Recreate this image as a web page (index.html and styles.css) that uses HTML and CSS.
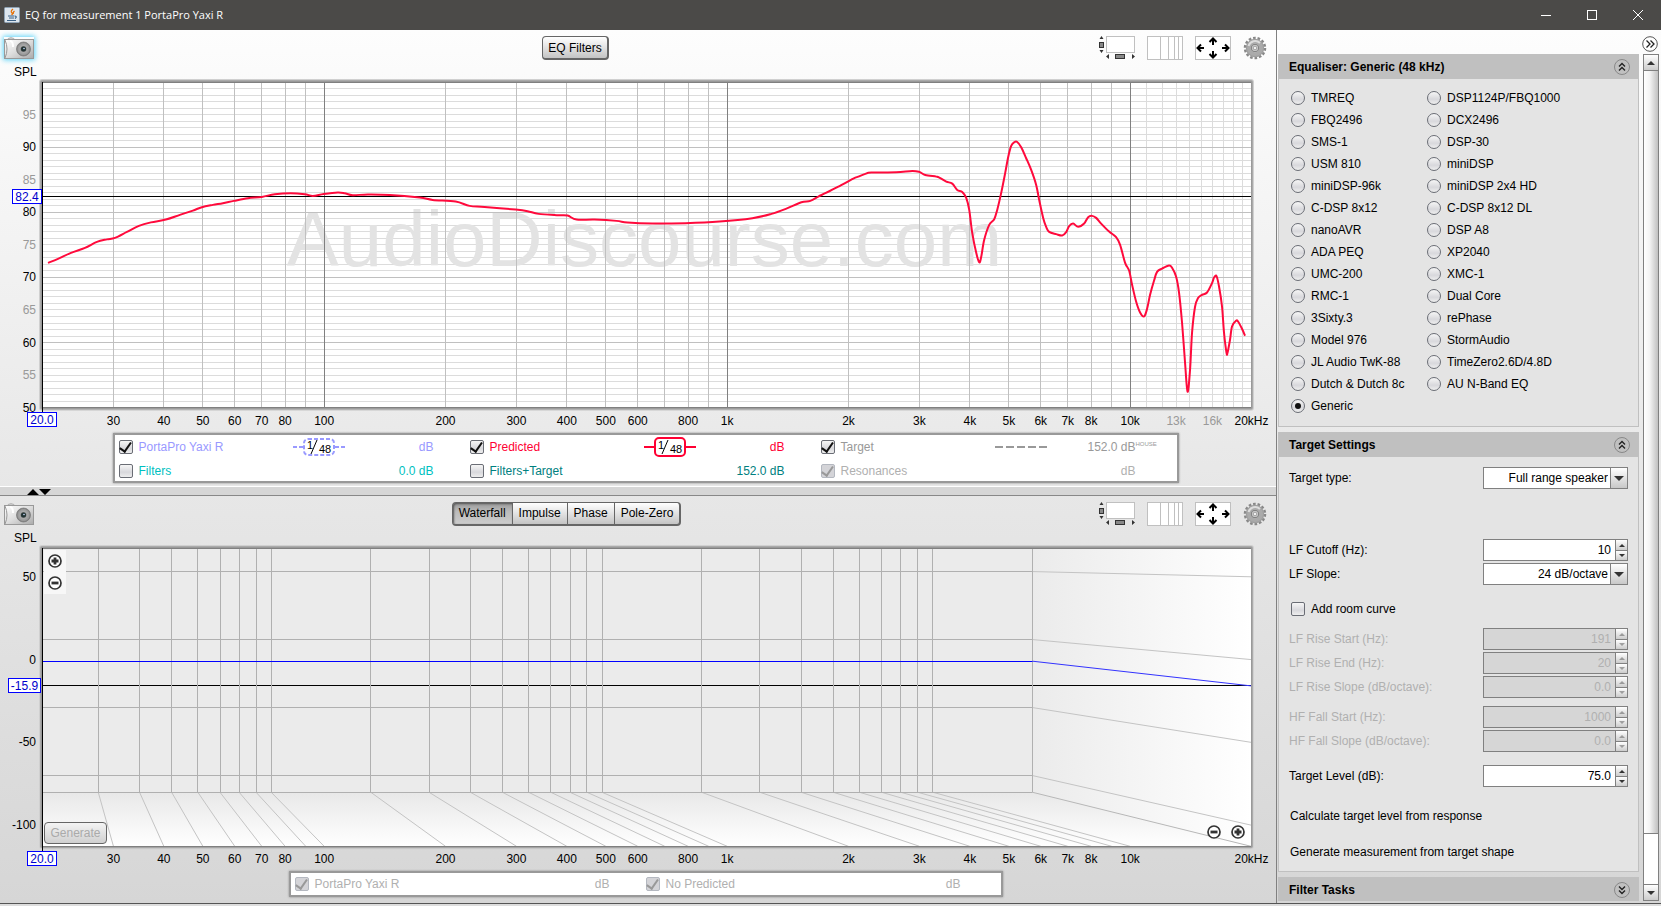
FILE: index.html
```
<!DOCTYPE html>
<html lang="en">
	<head>
		<meta charset="UTF-8">
		<title>EQ for measurement 1 PortaPro Yaxi R</title>
		<link rel="stylesheet" href="styles.css">
	</head>
	<body>
		<svg class="defs" width="0" height="0" aria-hidden="true">
			<defs>
				<linearGradient id="metal" x1="0" y1="0" x2="1" y2="1">
					<stop offset="0" stop-color="#fff"/>
					<stop offset=".5" stop-color="#ddd"/>
					<stop offset="1" stop-color="#aaa"/>
				</linearGradient>
				<radialGradient id="lens">
					<stop offset="0" stop-color="#333"/>
					<stop offset=".3" stop-color="#666"/>
					<stop offset=".5" stop-color="#aaa"/>
					<stop offset=".8" stop-color="#999"/>
					<stop offset="1" stop-color="#777"/>
				</radialGradient>
				<linearGradient id="wall">
					<stop offset="0" stop-color="#ebebeb"/>
					<stop offset="1" stop-color="#fff"/>
				</linearGradient>
				<linearGradient id="floor" x2="0" y2="1">
					<stop offset="0" stop-color="#e8e8e8"/>
					<stop offset="1" stop-color="#fff"/>
				</linearGradient>
			</defs>
			<symbol id="i-camera" viewBox="0 0 30 22">
				<path d="M4 1.500 Q7 -.5 10 1.500 V3 H4z" fill="#ccc" stroke="#999" stroke-width=".5"/>
				<rect x=".5" y="2.500" width="29" height="19" fill="url(#metal)" stroke="#999"/>
				<path d="M1 3 Q5 12 1 21" fill="none" stroke="#999"/>
				<path d="M6 4 Q9 4 9 10" fill="none" stroke="#fff" stroke-width="2"/>
				<circle cx="19.500" cy="12" r="7" fill="url(#lens)" stroke="#777" stroke-width=".7"/>
				<circle cx="19.500" cy="12" r="2.500" fill="#233"/>
				<circle cx="20" cy="11.500" r=".8" fill="#cdf"/>
			</symbol>
			<symbol id="i-scroll" viewBox="0 0 36 24">
				<rect x="7.500" y=".5" width="28" height="16" fill="#fff" stroke="#c0c0c0"/>
				<path d="M.5 3 L2.500 0 4.500 3z M.5 14 L2.500 17 4.500 14z M10 18 V23 L7 20.500z M33 18 V23 L36 20.500z" fill="#333"/>
				<rect x=".5" y="6.500" width="4" height="5" fill="#888" stroke="#333"/>
				<rect x="16.500" y="18.500" width="9" height="4" fill="#888" stroke="#333"/>
			</symbol>
			<symbol id="i-grid" viewBox="0 0 36 24">
				<rect x=".5" y=".5" width="35" height="23" fill="#fff" stroke="#c0c0c0"/>
				<path d="M13.500 1V23 M21.500 1V23 M27.500 1V23 M31.500 1V23" stroke="#c0c0c0"/>
			</symbol>
			<symbol id="i-fit" viewBox="0 0 36 24">
				<rect x=".5" y=".5" width="35" height="23" fill="#fff" stroke="#c0c0c0"/>
				<path d="M18 9V3 M14.500 6 L18 2.500 21.500 6 M18 15V21 M14.500 18 L18 21.500 21.500 18 M9 12H3 M6 8.500 L2.500 12 6 15.500 M27 12H33 M30 8.500 L33.500 12 30 15.500" fill="none" stroke="#000" stroke-width="2"/>
			</symbol>
			<symbol id="i-gear" viewBox="0 0 24 24">
				<circle cx="12" cy="12" r="9.500" fill="none" stroke="#888" stroke-width="3.500" stroke-dasharray="2.500 1.764"/>
				<circle cx="12" cy="12" r="6.700" fill="none" stroke="#aaa" stroke-width="5"/>
				<circle cx="12" cy="12" r="8.500" fill="none" stroke="#999" stroke-width=".8"/>
				<path d="M5.500 10 A7 7 0 0 1 17 7" fill="none" stroke="#ddd" stroke-width="2"/>
				<circle cx="12" cy="12" r="3.800" fill="#ccc" stroke="#777"/>
				<circle cx="12" cy="12" r="1.800" fill="#f0f0f0" stroke="#888" stroke-width=".7"/>
			</symbol>
			<symbol id="i-plus" viewBox="0 0 14 14">
				<circle cx="7" cy="7" r="6" fill="#fff" stroke="#333" stroke-width="1.700"/>
				<path d="M3.500 7H10.500 M7 3.500V10.500" stroke="#333" stroke-width="2.800"/>
			</symbol>
			<symbol id="i-minus" viewBox="0 0 14 14">
				<circle cx="7" cy="7" r="6" fill="#fff" stroke="#333" stroke-width="1.700"/>
				<path d="M3.500 7H10.500" stroke="#333" stroke-width="2.800"/>
			</symbol>
			<symbol id="i-up" viewBox="0 0 16 16">
				<circle cx="8" cy="8" r="7.500" fill="none" stroke="#888"/>
				<path d="M5 7.500 L8 4.500 11 7.500 M5 11.500 L8 8.500 11 11.500" fill="none" stroke="#222" stroke-width="1.400"/>
			</symbol>
			<symbol id="i-down" viewBox="0 0 16 16">
				<circle cx="8" cy="8" r="7.500" fill="none" stroke="#888"/>
				<path d="M5 4.500 L8 7.500 11 4.500 M5 8.500 L8 11.500 11 8.500" fill="none" stroke="#222" stroke-width="1.400"/>
			</symbol>
			<symbol id="i-more" viewBox="0 0 16 16">
				<circle cx="8" cy="8" r="7.300" fill="#fff" stroke="#555"/>
				<path d="M4.500 4.500 L8 8 4.500 11.500 M8.500 4.500 L12 8 8.500 11.500" fill="none" stroke="#222" stroke-width="1.300"/>
			</symbol>
		</svg>

		<header class="titlebar">
			<svg class="app-icon" width="16" height="16" viewBox="0 0 16 16">
				<rect x=".5" y=".5" width="15" height="15" rx="1" fill="#dde6ee" stroke="#8fa3b5"/>
				<path d="M9 2 Q6 4.500 8 6 Q9 7 7.500 8 M10.500 4 Q8.500 5.500 9.500 7" fill="none" stroke="#e76f00" stroke-width="1.200"/>
				<path d="M4 9H10.500 M5 11H10 M3 13.500H12 M11 9 Q13.500 9.500 11 11.500" fill="none" stroke="#3a6186" stroke-width="1.200"/>
			</svg>
			<span class="title">EQ for measurement 1 PortaPro Yaxi R</span>
			<button class="win" aria-label="Minimize"><svg width="10" height="10"><path d="M0 5.500H10" stroke="#fff"/></svg></button>
			<button class="win" aria-label="Maximize"><svg width="10" height="10"><rect x=".5" y=".5" width="9" height="9" fill="none" stroke="#fff"/></svg></button>
			<button class="win" aria-label="Close"><svg width="10" height="10"><path d="M0 0L10 10M10 0L0 10" stroke="#fff"/></svg></button>
		</header>

		<main>
			<div class="plots">
				<section class="panel panel-top">
					<div class="toolbar">
						<button class="icon camera active" aria-label="Capture graph"><svg width="30" height="22"><use href="#i-camera"/></svg></button>
						<div class="tabs"><button class="single">EQ Filters</button></div>
						<div class="tools">
							<button class="icon" aria-label="Scrollbars"><svg width="36" height="24"><use href="#i-scroll"/></svg></button>
							<button class="icon" aria-label="Frequency axis"><svg width="36" height="24"><use href="#i-grid"/></svg></button>
							<button class="icon" aria-label="Graph limits"><svg width="36" height="24"><use href="#i-fit"/></svg></button>
							<button class="icon" aria-label="Graph controls"><svg width="24" height="24"><use href="#i-gear"/></svg></button>
						</div>
					</div>
					<div class="chart"><svg id="spl"></svg></div>
					<div class="legend">
						<div class="trace measured">
							<label><input type="checkbox" checked>PortaPro Yaxi R</label>
							<svg width="52" height="20">
								<path d="M0 10H10 M42 10H52" stroke="#99f" stroke-width="2" stroke-dasharray="4 2"/>
								<rect x="11" y="2" width="30" height="16" rx="4" fill="#fff" stroke="#99f" stroke-width="2" stroke-dasharray="4 2"/>
								<path d="M18 17L24 3" stroke="#000"/>
								<text x="14" y="12">1</text><text x="26" y="16">48</text>
							</svg>
							<span class="value">dB</span>
						</div>
						<div class="trace predicted">
							<label><input type="checkbox" checked>Predicted</label>
							<svg width="52" height="20">
								<path d="M0 10H11 M41 10H52" stroke="#f03" stroke-width="2"/>
								<rect x="11" y="1" width="30" height="18" rx="4" fill="#fff" stroke="#f03" stroke-width="2"/>
								<path d="M18 17L24 3" stroke="#000"/>
								<text x="14" y="12">1</text><text x="26" y="16">48</text>
							</svg>
							<span class="value">dB</span>
						</div>
						<div class="trace target">
							<label><input type="checkbox" checked>Target</label>
							<svg width="52" height="20"><path d="M0 10H52" stroke="#999" stroke-width="2" stroke-dasharray="8 3"/></svg>
							<span class="value">152.0 dB</span><sup>HOUSE</sup>
						</div>
						<div class="trace filters">
							<label><input type="checkbox">Filters</label>
							<span class="value">0.0 dB</span>
						</div>
						<div class="trace combined">
							<label><input type="checkbox">Filters+Target</label>
							<span class="value">152.0 dB</span>
						</div>
						<div class="trace off">
							<label><input type="checkbox" checked disabled>Resonances</label>
							<span class="value">dB</span>
						</div>
					</div>
				</section>

				<div class="splitter"><svg width="24" height="6"><path d="M0 6L6 0 12 6z M12 0H24L18 6z"/></svg></div>

				<section class="panel panel-bottom">
					<div class="toolbar">
						<button class="icon camera" aria-label="Capture graph"><svg width="30" height="22"><use href="#i-camera"/></svg></button>
						<div class="tabs">
							<button class="selected">Waterfall</button>
							<button>Impulse</button>
							<button>Phase</button>
							<button>Pole-Zero</button>
						</div>
						<div class="tools">
							<button class="icon" aria-label="Scrollbars"><svg width="36" height="24"><use href="#i-scroll"/></svg></button>
							<button class="icon" aria-label="Frequency axis"><svg width="36" height="24"><use href="#i-grid"/></svg></button>
							<button class="icon" aria-label="Graph limits"><svg width="36" height="24"><use href="#i-fit"/></svg></button>
							<button class="icon" aria-label="Graph controls"><svg width="24" height="24"><use href="#i-gear"/></svg></button>
						</div>
					</div>
					<div class="chart">
						<svg id="waterfall"></svg>
						<div class="zoom zoom-y">
							<button class="icon" aria-label="Zoom in"><svg width="14" height="14"><use href="#i-plus"/></svg></button>
							<button class="icon" aria-label="Zoom out"><svg width="14" height="14"><use href="#i-minus"/></svg></button>
						</div>
						<div class="zoom zoom-x">
							<button class="icon" aria-label="Zoom out"><svg width="14" height="14"><use href="#i-minus"/></svg></button>
							<button class="icon" aria-label="Zoom in"><svg width="14" height="14"><use href="#i-plus"/></svg></button>
						</div>
						<button class="generate" disabled>Generate</button>
					</div>
					<div class="legend">
						<div class="trace off">
							<label><input type="checkbox" checked disabled>PortaPro Yaxi R</label>
							<span class="value">dB</span>
						</div>
						<div class="trace off">
							<label><input type="checkbox" checked disabled>No Predicted</label>
							<span class="value">dB</span>
						</div>
					</div>
				</section>
			</div>

			<aside>
				<div class="side-top">
					<button class="icon" aria-label="Hide panel"><svg width="16" height="16"><use href="#i-more"/></svg></button>
				</div>
				<div class="side-body">
					<div class="sections">
						<section class="group">
							<h2>Equaliser: Generic (48 kHz)<button class="icon" aria-label="Collapse"><svg width="16" height="16"><use href="#i-up"/></svg></button></h2>
							<div class="group-body equalisers">
								<label><input type="radio" name="eq">TMREQ</label>
								<label><input type="radio" name="eq">DSP1124P/FBQ1000</label>
								<label><input type="radio" name="eq">FBQ2496</label>
								<label><input type="radio" name="eq">DCX2496</label>
								<label><input type="radio" name="eq">SMS-1</label>
								<label><input type="radio" name="eq">DSP-30</label>
								<label><input type="radio" name="eq">USM 810</label>
								<label><input type="radio" name="eq">miniDSP</label>
								<label><input type="radio" name="eq">miniDSP-96k</label>
								<label><input type="radio" name="eq">miniDSP 2x4 HD</label>
								<label><input type="radio" name="eq">C-DSP 8x12</label>
								<label><input type="radio" name="eq">C-DSP 8x12 DL</label>
								<label><input type="radio" name="eq">nanoAVR</label>
								<label><input type="radio" name="eq">DSP A8</label>
								<label><input type="radio" name="eq">ADA PEQ</label>
								<label><input type="radio" name="eq">XP2040</label>
								<label><input type="radio" name="eq">UMC-200</label>
								<label><input type="radio" name="eq">XMC-1</label>
								<label><input type="radio" name="eq">RMC-1</label>
								<label><input type="radio" name="eq">Dual Core</label>
								<label><input type="radio" name="eq">3Sixty.3</label>
								<label><input type="radio" name="eq">rePhase</label>
								<label><input type="radio" name="eq">Model 976</label>
								<label><input type="radio" name="eq">StormAudio</label>
								<label><input type="radio" name="eq">JL Audio TwK-88</label>
								<label><input type="radio" name="eq">TimeZero2.6D/4.8D</label>
								<label><input type="radio" name="eq">Dutch &amp; Dutch 8c</label>
								<label><input type="radio" name="eq">AU N-Band EQ</label>
								<label><input type="radio" name="eq" checked>Generic</label>
							</div>
						</section>

						<section class="group">
							<h2>Target Settings<button class="icon" aria-label="Collapse"><svg width="16" height="16"><use href="#i-up"/></svg></button></h2>
							<div class="group-body settings">
								<div class="row">
									<label for="type">Target type:</label>
									<div class="combo"><select id="type"><option>Full range speaker</option></select></div>
								</div>
								<div class="row gap-large">
									<label for="cutoff">LF Cutoff (Hz):</label>
									<div class="spinner"><input id="cutoff" type="text" value="10"><button aria-label="Up"></button><button aria-label="Down"></button></div>
								</div>
								<div class="row">
									<label for="slope">LF Slope:</label>
									<div class="combo"><select id="slope"><option>24 dB/octave</option></select></div>
								</div>
								<div class="row gap-medium">
									<label class="check"><input type="checkbox">Add room curve</label>
								</div>
								<div class="row gap-small disabled">
									<label for="rise-start">LF Rise Start (Hz):</label>
									<div class="spinner"><input id="rise-start" type="text" value="191" disabled><button aria-label="Up" disabled></button><button aria-label="Down" disabled></button></div>
								</div>
								<div class="row disabled">
									<label for="rise-end">LF Rise End (Hz):</label>
									<div class="spinner"><input id="rise-end" type="text" value="20" disabled><button aria-label="Up" disabled></button><button aria-label="Down" disabled></button></div>
								</div>
								<div class="row disabled">
									<label for="rise-slope">LF Rise Slope (dB/octave):</label>
									<div class="spinner"><input id="rise-slope" type="text" value="0.0" disabled><button aria-label="Up" disabled></button><button aria-label="Down" disabled></button></div>
								</div>
								<div class="row gap-small disabled">
									<label for="fall-start">HF Fall Start (Hz):</label>
									<div class="spinner"><input id="fall-start" type="text" value="1000" disabled><button aria-label="Up" disabled></button><button aria-label="Down" disabled></button></div>
								</div>
								<div class="row disabled">
									<label for="fall-slope">HF Fall Slope (dB/octave):</label>
									<div class="spinner"><input id="fall-slope" type="text" value="0.0" disabled><button aria-label="Up" disabled></button><button aria-label="Down" disabled></button></div>
								</div>
								<div class="row gap-medium">
									<label for="level">Target Level (dB):</label>
									<div class="spinner"><input id="level" type="text" value="75.0"><button aria-label="Up"></button><button aria-label="Down"></button></div>
								</div>
								<button class="action">Calculate target level from response</button>
								<button class="action">Generate measurement from target shape</button>
							</div>
						</section>

						<section class="group closed">
							<h2>Filter Tasks<button class="icon" aria-label="Expand"><svg width="16" height="16"><use href="#i-down"/></svg></button></h2>
						</section>
					</div>
					<div class="scrollbar">
						<button aria-label="Scroll up"></button>
						<div class="thumb"></div>
						<div class="track"></div>
						<button aria-label="Scroll down"></button>
					</div>
				</div>
			</aside>
		</main>
		<footer></footer>
		<script src="script.js"></script>
	</body>
</html>
```

FILE: styles.css
```
* {
	box-sizing: border-box;
}
html, body {
	margin: 0;
	height: 100%;
}
body {
	display: grid;
	grid-template-rows: 30px minmax(0, 1fr) 3px;
	font-family: "Liberation Sans", Arial, sans-serif;
	font-size: 12px;
	line-height: 16px;
	color: #000;
	overflow: hidden;
}
button, input, select {
	font: inherit;
	color: inherit;
	margin: 0;
	padding: 0;
}
svg {
	display: block;
}
.defs {
	position: absolute;
}
.icon {
	display: block;
	border: none;
	background: none;
}

.titlebar {
	display: flex;
	align-items: center;
	padding-left: 4px;
	background: #4b4a48;
	color: #fff;
	font-family: "Open Sans", "Noto Sans", sans-serif;
	font-size: 11px;
}
.titlebar .title {
	flex: 1;
	padding-left: 5px;
}
.win {
	display: flex;
	align-items: center;
	justify-content: center;
	width: 46px;
	height: 30px;
	border: none;
	background: none;
}

main {
	display: flex;
	min-height: 0;
	background: linear-gradient(#fdfdfd, #e8e8e8 50%, #d6d6d6);
}
.plots {
	flex: 1;
	min-width: 0;
	display: flex;
	flex-direction: column;
}
.panel {
	display: flex;
	flex-direction: column;
	min-height: 0;
}
.panel-top {
	flex: 458 0 0;
	padding-bottom: 3px;
}
.panel-bottom {
	flex: 406 0 0;
	padding-bottom: 6px;
}

.toolbar {
	display: flex;
	align-items: center;
	justify-content: space-between;
	height: 36px;
	padding: 0 9px 0 4px;
}
.camera.active {
	box-shadow: 0 0 5px 1px #5cd3f7;
}
.panel-top .tabs {
	padding-left: 18px;
}
.tabs {
	display: flex;
}
.tabs button {
	height: 24px;
	padding: 0 6px;
	border: 1px solid #666;
	border-bottom-width: 2px;
	border-left-width: 0;
	background: linear-gradient(#fff, #e8e8e8 40%, #c4c4c4);
}
.tabs button:first-child {
	border-left-width: 1px;
	border-radius: 4px 0 0 4px;
}
.tabs button:last-child {
	border-right-width: 2px;
	border-radius: 0 4px 4px 0;
}
.tabs .single:first-child {
	padding: 0 5px;
	border-radius: 4px;
}
.tabs .selected {
	background: linear-gradient(#999, #bbb 40%, #ccc);
	box-shadow: inset 1px 1px 2px #555;
}
.tools {
	display: flex;
	gap: 12px;
}

.chart {
	position: relative;
	flex: 1;
	min-height: 0;
}
.chart > svg {
	position: absolute;
	width: 100%;
	height: 100%;
}
.watermark {
	font-size: 78px;
	fill: #e3e3e3;
}
.minor {
	fill: #999;
}
.cursor {
	fill: #00c;
}
.zoom {
	position: absolute;
	display: flex;
	gap: 8px;
	padding: 4px;
	background: #f7f7f7;
}
.zoom-y {
	flex-direction: column;
	top: 18px;
	left: 44px;
}
.zoom-x {
	right: 26px;
	bottom: 27px;
	gap: 10px;
	padding: 5px;
	background: none;
}
.generate {
	position: absolute;
	left: 44px;
	bottom: 27px;
	width: 63px;
	height: 22px;
	border: 1px solid #666;
	border-radius: 4px;
	background: linear-gradient(#f4f4f4, #d0d0d0);
	color: #aaa;
}

/* trace table under each graph */
.legend {
	display: grid;
	grid-template-columns: repeat(3, 351px);
	align-self: center;
	width: 1066px;
	height: 50px;
	margin-left: 15px;
	padding: 0 4px;
	border: 2px solid #999;
	background: #fff;
	box-shadow: 0 0 2px #888;
}
.panel-bottom .legend {
	grid-template-columns: repeat(2, 351px);
	width: 714px;
	height: 26px;
}
.trace {
	display: flex;
	align-items: center;
	height: 24px;
}
.panel-bottom .trace {
	height: 22px;
}
.trace label {
	display: flex;
	align-items: center;
	gap: 6px;
	flex: 0 0 174px;
}
.trace label + .value {
	flex: 0 0 141px;
	text-align: right;
}
.trace svg + .value {
	flex: 0 0 89px;
	text-align: right;
}
.trace sup {
	font-size: 6px;
	line-height: 8px;
	align-self: flex-start;
	padding-top: 5px;
}
.trace svg text {
	font-size: 11px;
	fill: #000;
}
.measured {
	color: #99f;
}
.predicted {
	color: #f03;
}
.target {
	color: #999;
}
.filters {
	color: #00bfbf;
}
.combined {
	color: #008080;
}
.off {
	color: #b0b0b0;
}

.splitter {
	height: 10px;
	padding: 2px 0 0 27px;
	border-top: 1px solid #fff;
	border-bottom: 1px solid #888;
	background: #d6d6d6;
}

aside {
	width: 385px;
	display: flex;
	flex-direction: column;
	border-left: 1px solid #808080;
}
.side-top {
	display: flex;
	justify-content: flex-end;
	height: 24px;
	padding: 4px 3px 0 0;
}
.side-body {
	display: flex;
	flex: 1;
	min-height: 0;
	gap: 4px;
	padding: 0 2px 2px 1px;
}
.sections {
	flex: 1;
	display: flex;
	flex-direction: column;
	gap: 5px;
	overflow: hidden;
}
.group h2 {
	display: flex;
	align-items: center;
	justify-content: space-between;
	height: 25px;
	margin: 0;
	padding: 0 9px 0 11px;
	background: #c0c0c0;
	font-size: 12px;
}
.group-body {
	border: 1px solid #c0c0c0;
	border-top: none;
	background: #e4e4e4;
}
.equalisers {
	display: grid;
	grid-template-columns: 136px auto;
	grid-auto-rows: 22px;
	padding: 8px 12px 9px;
}
.equalisers label, .check {
	display: flex;
	align-items: center;
	gap: 6px;
}

input[type="checkbox"], input[type="radio"] {
	appearance: none;
	display: grid;
	place-items: center;
	width: 14px;
	height: 14px;
	border: 1px solid #6a6d75;
	border-radius: 2px;
	background: linear-gradient(#f6f6f6, #d8d8dc 60%, #eee);
}
input[type="radio"] {
	border-radius: 50%;
}
input[type="radio"]:checked::after {
	content: "";
	width: 6px;
	height: 6px;
	border-radius: 50%;
	background: #111;
}
input[type="checkbox"]:checked::after {
	content: "";
	width: 5px;
	height: 10px;
	border: solid #111;
	border-width: 0 2px 2px 0;
	transform: translateY(-1px) rotate(35deg);
}
input[type="checkbox"]:disabled {
	border-color: #b4b8c0;
	background: #d4d4d8;
}
input[type="checkbox"]:disabled::after {
	border-color: #999;
}

.settings {
	display: flex;
	flex-direction: column;
	gap: 2px;
	padding: 10px 10px 8px;
}
.row {
	display: flex;
	align-items: center;
	justify-content: space-between;
	height: 22px;
}
.check {
	padding-left: 2px;
}
.gap-small {
	margin-top: 6px;
}
.gap-medium {
	margin-top: 11px;
}
.gap-large {
	margin-top: 48px;
}
.combo, .spinner {
	position: relative;
	width: 145px;
	height: 22px;
	border: 1px solid #808080;
	background: #fff;
}
.combo {
	display: flex;
}
.combo select {
	width: 100%;
	height: 20px;
	padding-right: 19px;
	border: none;
	appearance: none;
	background: none;
	text-align: right;
	text-align-last: right;
}
.combo::before {
	content: "";
	position: absolute;
	top: 0;
	right: 0;
	width: 16px;
	height: 20px;
	border-left: 1px solid #808080;
	background: linear-gradient(#fff, #c8c8c8);
	pointer-events: none;
}
.combo::after {
	content: "";
	position: absolute;
	top: 8px;
	right: 3px;
	border: solid transparent;
	border-width: 5px 5px 0;
	border-top-color: #333;
	pointer-events: none;
}
.spinner {
	display: grid;
	grid-template: 10px 10px / 1fr 12px;
}
.spinner input {
	grid-row: 1 / 3;
	width: 100%;
	padding-right: 4px;
	border: none;
	background: none;
	text-align: right;
}
.spinner button, .scrollbar button {
	display: grid;
	place-items: center;
	border: none;
	background: linear-gradient(#fff, #ccc);
}
.spinner button {
	border-left: 1px solid #808080;
}
.spinner button:last-child {
	border-top: 1px solid #808080;
}
.spinner button::after, .scrollbar button::after {
	content: "";
	border: solid transparent;
	border-width: 0 3px 3px;
	border-bottom-color: #333;
}
.spinner button:last-child::after, .scrollbar button:last-child::after {
	border-width: 3px 3px 0;
	border-top-color: #333;
}
.disabled {
	color: #b0b0b0;
}
.disabled .spinner {
	background: #d6d6d6;
}
.disabled .spinner button::after {
	opacity: .4;
}
.action {
	height: 22px;
	margin-top: 12px;
	padding-left: 1px;
	border: none;
	background: none;
	text-align: left;
}
.row + .action {
	margin-top: 16px;
}

.scrollbar {
	display: flex;
	flex-direction: column;
	width: 16px;
	border: 1px solid #808080;
	background: #fff;
}
.scrollbar button {
	height: 15px;
}
.scrollbar button::after {
	border-width: 0 4px 4px;
}
.scrollbar button:last-child::after {
	border-width: 4px 4px 0;
}
.thumb {
	flex: 766;
	border: solid #808080;
	border-width: 1px 0;
	background: linear-gradient(90deg, #fff, #f4f4f4 40%, #c0c0c0);
}
.track {
	flex: 50;
	border-bottom: 1px solid #808080;
}

footer {
	border-top: 1px solid #555;
	background: #ddd;
}
```

FILE: script.js
```
"use strict";

{

	const NS = "http://www.w3.org/2000/svg";
	const $ = selectors => document.querySelector(selectors);
	const pad = { left: 42, right: 25, top: 16, bottom: 25 };

	// frequency response, in a 1210 x 326 plot area
	const response = [
		[6,181],[16,177],[29,171],[43,166],[55,160],[65,157.500],[73,156],[85,150],[97,144],[109,140.500],[124,137.700],[138,133],[151,128.700],[160,125.300],[171,123],[181,121.300],[192,119],[206,116.300],[220,115],[233,112.300],[249,111.300],[263,112.300],[271,114],[282,112],[296,110.500],[303,111.300],[311,113.300],[326,112.500],[348,113],[378,115.700],[391,118],[414,119.700],[428,124],[443,125],[474,127.700],[486,129.300],[497,132],[517,133.300],[526,133.700],[535,137.700],[553,137.700],[575,139],[586,140.700],[611,141.700],[644,141.300],[678,139.700],[711,136.300],[730,132],[745,126.700],[760,120.300],[769,119],[777,114.700],[784,111.300],[797,104.700],[812,96.700],[817,94.700],[824,92],[830,90.700],[855,90.300],[871,89],[878,90],[884,93],[895,94.700],[898,95.700],[905,99.700],[911,101.700],[916,108],[921,110],[925,116],[928,128],[931,151],[935,171],[938,180.500],[940,175],[943,158],[948,143],[953,137.300],[956,128],[960,111],[964,91],[967,75],[970,64],[973,60.300],[976,60],[980,65.300],[985,76.300],[990,88],[995,103],[998,118],[1002,136],[1005,145],[1008,150],[1015,152.300],[1021,153.700],[1025,150.300],[1028,144.300],[1032,141.700],[1037,145],[1043,141.700],[1047,135.300],[1051,134],[1055,136],[1060,141.700],[1068,149.700],[1075,155.300],[1079,163],[1084,181],[1088,188.700],[1091,203],[1095,219.700],[1099,230.700],[1103,234.700],[1106,227],[1109,213],[1113,198.700],[1116,190],[1121,186.700],[1128,183.700],[1131,186],[1135,194.700],[1138,211],[1141,241],[1144,281],[1146.500,310],[1149,288],[1151,251],[1154,225],[1157,216.300],[1161,213],[1166,210.700],[1171,201.300],[1173,195.700],[1175.500,194.300],[1178,204.700],[1181,224.700],[1183,251],[1185.500,271],[1186.500,271],[1189,258],[1191,244.700],[1195,239],[1197,239.700],[1201,247],[1204,254]
	];

	function el(parent, name, attrs, text) {
		const node = document.createElementNS(NS, name);
		for(const key in attrs) node.setAttribute(key, attrs[key]);
		if(text !== undefined) node.textContent = text;
		parent.appendChild(node);
		return node;
	}

	const crisp = v => Math.floor(v) + 0.5;

	function line(svg, x1, y1, x2, y2, stroke) {
		if(x1 === x2) x1 = x2 = crisp(x1);
		if(y1 === y2) y1 = y2 = crisp(y1);
		el(svg, "line", { x1, y1, x2, y2, stroke });
	}

	function area(svg) {
		svg.innerHTML = "";
		const { width, height } = svg.getBoundingClientRect();
		const a = { l: pad.left, t: pad.top, r: width - pad.right, b: height - pad.bottom };
		a.w = a.r - a.l;
		a.h = a.b - a.t;
		a.x = f => a.l + 0.5 + a.w * Math.log10(f / 20) / 3;
		[[3, "#d0d0d0"], [2, "#aaa"], [1, "#999"]].forEach(([d, fill]) =>
			el(svg, "rect", { x: a.l - d, y: a.t - d, width: a.w + d * 2, height: a.h + d * 2, rx: d, fill }));
		return a;
	}

	function frame(svg, a) {
		line(svg, a.l, a.t, a.r, a.t, "#808080");
		line(svg, a.l, a.b, a.r, a.b, "#808080");
		line(svg, a.l, a.t, a.l, a.b + 5, "#000");
		el(svg, "text", { x: 14, y: 10 }, "SPL");
	}

	function freqLabels(svg, a, minor) {
		const labels = { 30: "30", 40: "40", 50: "50", 60: "60", 70: "70", 80: "80", 100: "100", 200: "200", 300: "300", 400: "400", 500: "500", 600: "600", 800: "800", 1000: "1k", 2000: "2k", 3000: "3k", 4000: "4k", 5000: "5k", 6000: "6k", 7000: "7k", 8000: "8k", 10000: "10k", 20000: "20kHz" };
		for(const f in labels) el(svg, "text", { x: a.x(f), y: a.b + 17, "text-anchor": "middle" }, labels[f]);
		if(minor) [13, 16].forEach(k => el(svg, "text", { x: a.x(k * 1000), y: a.b + 17, "text-anchor": "middle", class: "minor" }, k + "k"));
		marker(svg, 27, a.b + 5, 29, "20.0");
	}

	function marker(svg, x, y, width, text) {
		y = crisp(y);
		el(svg, "rect", { x: x + 0.5, y, width, height: 14, fill: "#fff", stroke: "#00f" });
		el(svg, "text", { x: x + width / 2 + 0.5, y: y + 11, "text-anchor": "middle", class: "cursor" }, text);
	}

	function frequencies(max) {
		const list = [];
		for(let d = 10; d < max; d *= 10)
			for(let i = 1; i < 10; i++) if(d * i > 20 && d * i < max) list.push(d * i);
		return list;
	}

	// Catmull-Rom through the points
	function smooth(points) {
		let d = `M${points[0]}`;
		for(let i = 0; i < points.length - 1; i++) {
			const p0 = points[i - 1] || points[i], p1 = points[i], p2 = points[i + 1], p3 = points[i + 2] || p2;
			d += `C${p1[0] + (p2[0] - p0[0]) / 6} ${p1[1] + (p2[1] - p0[1]) / 6} ${p2[0] - (p3[0] - p1[0]) / 6} ${p2[1] - (p3[1] - p1[1]) / 6} ${p2[0]} ${p2[1]}`;
		}
		return d;
	}

	function drawSpl() {
		const svg = $`#spl`;
		const a = area(svg);
		const y = db => a.b - (db - 50) / 50 * a.h;
		el(svg, "rect", { x: a.l, y: a.t, width: a.w, height: a.h, fill: "#fff" });
		for(let db = 51; db < 100; db++) if(db % 10) line(svg, a.l, y(db), a.r, y(db), "#dcdcdc");
		for(let k = 11; k < 20; k++) line(svg, a.x(k * 1000), a.t, a.x(k * 1000), a.b, "#dcdcdc");
		el(svg, "text", { x: a.l + a.w / 2 - 2, y: y(80) + 54, "text-anchor": "middle", class: "watermark" }, "AudioDiscourse.com");
		for(let db = 60; db < 100; db += 10) line(svg, a.l, y(db), a.r, y(db), "#c0c0c0");
		frequencies(10001).forEach(f => line(svg, a.x(f), a.t, a.x(f), a.b, Number.isInteger(Math.log10(f)) ? "#808080" : "#c0c0c0"));
		line(svg, a.l, y(82.4), a.r, y(82.4), "#000");
		const points = response.map(([px, py]) => [a.l + px * a.w / 1210, a.t + py * a.h / 326]);
		el(svg, "path", { d: smooth(points), fill: "none", stroke: "#ff0a3c", "stroke-width": 2 });
		frame(svg, a);
		for(let db = 50; db < 100; db += 5)
			el(svg, "text", { x: 36, y: y(db) + 4, "text-anchor": "end", class: db % 10 ? "minor" : "" }, db);
		marker(svg, 12, y(82.4) - 7, 29, "82.4");
		freqLabels(svg, a, true);
	}

	function drawWaterfall() {
		const svg = $`#waterfall`;
		const a = area(svg);
		const backX = x => a.l - 2 + (x - a.l - 0.5) * 0.821;
		const right = backX(a.r + 0.5);
		const bottom = a.t + a.h * 0.819;
		const y = db => a.t + a.h * (0.374 - db * 0.00555);
		const backY = db => a.t + a.h * (0.307 - db * 0.00456);
		el(svg, "rect", { x: a.l, y: a.t, width: a.w, height: a.h, fill: "#ebebeb" });
		el(svg, "polygon", { points: `${right},${a.t} ${a.r},${a.t} ${a.r},${a.b} ${right},${bottom}`, fill: "url(#wall)" });
		el(svg, "polygon", { points: `${a.l},${bottom} ${right},${bottom} ${a.r},${a.b} ${a.l},${a.b}`, fill: "url(#floor)" });
		line(svg, a.l, y(-15.9), a.r, y(-15.9), "#000");
		[50, 0, -50, -100].forEach(db => {
			line(svg, a.l, backY(db), right, backY(db), "#b0b0b0");
			line(svg, right, backY(db), a.r, y(db), "#c4c4c4");
		});
		frequencies(10001).forEach(f => {
			line(svg, backX(a.x(f)), a.t, backX(a.x(f)), bottom, "#b0b0b0");
			line(svg, backX(a.x(f)), bottom, a.x(f), a.b, "#c4c4c4");
		});
		line(svg, right, a.t, right, bottom, "#b0b0b0");
		line(svg, a.l, bottom, right, bottom, "#b0b0b0");
		line(svg, right, bottom, a.r, a.b, "#b8b8b8");
		line(svg, a.l, backY(-15.9), right, backY(-15.9), "#00f");
		line(svg, right, backY(-15.9), a.r, y(-15.9), "#33f");
		frame(svg, a);
		[50, 0, -50, -100].forEach(db => el(svg, "text", { x: 36, y: y(db) + 4, "text-anchor": "end" }, db));
		marker(svg, 8, y(-15.9) - 7, 32, "-15.9");
		freqLabels(svg, a, false);
	}

	function draw() {
		drawSpl();
		drawWaterfall();
	}

	window.addEventListener("resize", draw, { passive: true });
	draw();

};
```
